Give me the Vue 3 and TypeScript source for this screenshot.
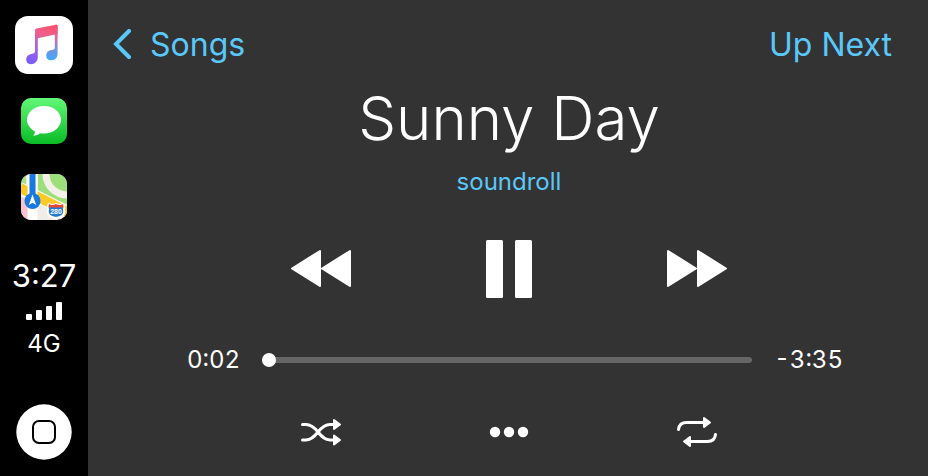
<script setup lang="ts">
import { computed, ref } from 'vue'

const title = 'Sunny Day'
const artist = 'soundroll'
const duration = 217
const elapsed = ref(2)
const playing = ref(true)

function clock(seconds: number): string {
  return `${Math.floor(seconds / 60)}:${String(seconds % 60).padStart(2, '0')}`
}

const elapsedLabel = computed(() => clock(elapsed.value))
const remainingLabel = computed(() => `-${clock(duration - elapsed.value)}`)
const sliderPosition = computed({
  get: () => Math.max(0, elapsed.value - 2),
  set: (value: number) => {
    elapsed.value = Number(value) + 2
  },
})
</script>

<template>
  <div class="screen">
    <aside class="dock">
      <nav class="apps">
        <button class="app app-large" type="button" aria-label="Music">
          <svg viewBox="0 0 58 58">
            <defs>
              <linearGradient id="note" gradientUnits="userSpaceOnUse" x1="38" y1="9" x2="24" y2="48">
                <stop offset="0" stop-color="#f94f6b" />
                <stop offset="0.3" stop-color="#f0608c" />
                <stop offset="0.65" stop-color="#a164e8" />
                <stop offset="1" stop-color="#7c5cfa" />
              </linearGradient>
              <linearGradient id="note-right" gradientUnits="userSpaceOnUse" x1="40" y1="9" x2="38" y2="44">
                <stop offset="0" stop-color="#f94f6b" />
                <stop offset="0.3" stop-color="#df659d" />
                <stop offset="0.65" stop-color="#8190d8" />
                <stop offset="1" stop-color="#3aaaf8" />
              </linearGradient>
            </defs>
            <rect width="58" height="58" rx="13" fill="#fff" />
            <path
              d="M20 14.2Q20 12.8 21.4 12.5L41 8.8Q42.6 8.5 42.6 10V18L22.8 22.2V41C22.8 45.5 19.8 48.2 15.8 48.2C13 48.2 11.2 46.3 11.2 43.5C11.2 40.4 13.2 38.4 16 37.9L18.3 37.5Q20 37.2 20 35.5Z"
              fill="url(#note)"
            />
            <path
              d="M39.8 9L41 8.8Q42.6 8.5 42.6 10V37C42.6 41.8 39.9 44.3 36 44.3C33 44.3 31.2 42.5 31.2 39.7C31.2 36.6 33.3 34.6 36 34.1L38.2 33.7Q39.8 33.4 39.8 31.5Z"
              fill="url(#note-right)"
            />
          </svg>
        </button>
        <button class="app" type="button" aria-label="Messages">
          <svg viewBox="0 0 46 46">
            <defs>
              <linearGradient id="green" x1="0" y1="0" x2="0" y2="1">
                <stop offset="0" stop-color="#62f878" />
                <stop offset="1" stop-color="#0abb25" />
              </linearGradient>
            </defs>
            <rect width="46" height="46" rx="10" fill="url(#green)" />
            <path
              d="M23 8C13.6 8 6 14.1 6 21.8C6 26.5 9 30.7 13.7 33.2C14.2 34.9 13.4 36.6 12.2 37.8C15.1 37.7 17.4 36.6 19.2 35.2C20.4 35.4 21.7 35.6 23 35.6C32.4 35.6 40 29.4 40 21.8C40 14.1 32.4 8 23 8Z"
              fill="#fff"
            />
          </svg>
        </button>
        <button class="app" type="button" aria-label="Maps">
          <svg viewBox="0 0 46 46">
            <defs>
              <clipPath id="tile"><rect width="46" height="46" rx="10" /></clipPath>
            </defs>
            <g clip-path="url(#tile)">
              <rect width="46" height="46" fill="#efede5" />
              <path d="M0 0H5V12L0 9Z" fill="#a5e183" />
              <path d="M17 0H46V35L17 16Z" fill="#9ddf7a" />
              <circle cx="46" cy="0" r="21" fill="none" stroke="#f2f0e9" stroke-width="7" />
              <path d="M0 23L16 31V46H0Z" fill="#f8c3cd" />
              <path d="M-1 14L47 38" fill="none" stroke="#fff" stroke-width="12" />
              <path d="M-1 14L47 38" fill="none" stroke="#fbc928" stroke-width="10" />
              <path d="M6.5 0H16.5V46H6.5Z" fill="#fff" />
              <path d="M8.5 0H14.5V27H8.5Z" fill="#1679df" />
              <circle cx="11.5" cy="27" r="8" fill="#1679df" />
              <path d="M11.5 20.5L15.2 31L11.5 28.8L7.8 31Z" fill="#fff" />
              <path
                d="M28 30Q26 32 27 35Q25 43 35 44Q45 43 43 35Q44 32 42 30Q39 32 35 30Q31 32 28 30Z"
                fill="#277bcc"
                stroke="#fff"
                stroke-width="2"
              />
              <path d="M27.5 33.5L28 30Q31 32 35 30Q39 32 42 30L42.5 33.5Z" fill="#e54934" />
              <text x="35" y="40" class="route">280</text>
            </g>
          </svg>
        </button>
      </nav>

      <div class="status">
        <time class="time">3:27</time>
        <svg class="signal" viewBox="0 0 36 18" role="img" aria-label="Signal strength">
          <rect x="0" y="12" width="6" height="6" rx="1" />
          <rect x="10" y="8" width="6" height="10" rx="1" />
          <rect x="20" y="4" width="6" height="14" rx="1" />
          <rect x="30" y="0" width="6" height="18" rx="1" />
        </svg>
        <span class="network">4G</span>
      </div>

      <button class="home" type="button" aria-label="Home">
        <svg viewBox="0 0 56 56">
          <circle cx="28" cy="28" r="27.7" fill="#fff" />
          <rect x="17" y="17" width="22" height="22" rx="6" fill="none" stroke="#000" stroke-width="2" />
        </svg>
      </button>
    </aside>

    <main class="player">
      <header class="bar">
        <a class="link back" href="#songs">
          <svg class="chevron" viewBox="0 0 20 32"><path d="M17 2L4 15L17 28" /></svg>
          <span>Songs</span>
        </a>
        <a class="link" href="#up-next">Up Next</a>
      </header>

      <h1 class="title">{{ title }}</h1>
      <p class="artist">{{ artist }}</p>

      <div class="controls transport">
        <button type="button" aria-label="Previous">
          <svg class="skip" viewBox="0 0 62 40">
            <path d="M30 2V37L2 19.5ZM60 2V37L32 19.5Z" />
          </svg>
        </button>
        <button type="button" :aria-label="playing ? 'Pause' : 'Play'" @click="playing = !playing">
          <svg class="pause" viewBox="0 0 48 60">
            <template v-if="playing">
              <rect x="1" y="1" width="17" height="58" rx="1.5" />
              <rect x="30" y="1" width="17" height="58" rx="1.5" />
            </template>
            <path v-else d="M3 2L46 30L3 58Z" />
          </svg>
        </button>
        <button type="button" aria-label="Next">
          <svg class="skip" viewBox="0 0 62 40">
            <path d="M2 2V37L30 19.5ZM32 2V37L60 19.5Z" />
          </svg>
        </button>
      </div>

      <div class="progress">
        <span class="clock">{{ elapsedLabel }}</span>
        <input v-model.number="sliderPosition" class="seek" type="range" min="0" :max="duration - 2" aria-label="Seek" />
        <span class="clock">{{ remainingLabel }}</span>
      </div>

      <div class="controls options">
        <button type="button" aria-label="Shuffle">
          <svg class="option" viewBox="0 0 42 32">
            <path
              class="line"
              d="M2.5 8.5H6C11 8.5 14 11 18 16C22 21 25 24 30 24H34M2.5 24H6C11 24 14 21 18 16C22 11 25 8.5 30 8.5H34"
            />
            <path class="head" d="M34 4L40 8.5L34 13ZM34 19.5L40 24L34 28.5Z" />
          </svg>
        </button>
        <button type="button" aria-label="More">
          <svg class="option" viewBox="0 0 42 32">
            <circle cx="7" cy="16" r="5.2" />
            <circle cx="21" cy="16" r="5.2" />
            <circle cx="35" cy="16" r="5.2" />
          </svg>
        </button>
        <button type="button" aria-label="Repeat">
          <svg class="option" viewBox="0 0 42 32">
            <path class="line" d="M2.5 13.5C3 9 6 6.5 10.5 6.5H28M39.5 18.5C39 23 36 25.5 31.5 25.5H14" />
            <path class="head" d="M28 2L34 6.5L28 11ZM14 21L8 25.5L14 30Z" />
          </svg>
        </button>
      </div>
    </main>
  </div>
</template>

<style>
body {
  margin: 0;
  background: #333;
}
</style>

<style scoped>
.screen {
  display: flex;
  min-height: 100vh;
  background: #333;
  color: #fff;
  font-family: Inter, "Liberation Sans", sans-serif;
}

button {
  display: flex;
  padding: 0;
  border: 0;
  background: none;
  color: inherit;
  cursor: pointer;
}

svg {
  display: block;
  fill: currentColor;
}

.dock {
  box-sizing: border-box;
  display: flex;
  flex: 0 0 88px;
  flex-direction: column;
  align-items: center;
  padding: 16px 0;
  background: #000;
}

.apps {
  display: flex;
  flex-direction: column;
  align-items: center;
}

.app {
  width: 46px;
  height: 46px;
  margin-bottom: 30px;
}

.app-large {
  width: 58px;
  height: 58px;
  margin-bottom: 24px;
}

.app svg {
  width: 100%;
}

.route {
  fill: #fff;
  font-size: 7px;
  font-weight: 800;
  text-anchor: middle;
}

.status {
  display: flex;
  flex-direction: column;
  align-items: center;
  margin-top: 6px;
}

.time {
  font-size: 31px;
  line-height: 40px;
}

.signal {
  width: 36px;
  margin: 6px 0 8px;
}

.network {
  font-size: 24px;
  line-height: 32px;
}

.home {
  margin-top: auto;
}

.home svg {
  width: 56px;
}

.player {
  flex: 1;
  min-width: 0;
  padding: 1px 0 0 2px;
}

.bar {
  display: flex;
  justify-content: space-between;
  padding: 24px 36px 16px 22px;
}

.link {
  color: #5ac8fa;
  font-size: 32px;
  line-height: 40px;
  text-decoration: none;
}

.back {
  display: flex;
  align-items: center;
  gap: 18px;
}

.chevron {
  width: 20px;
}

.chevron path {
  fill: none;
  stroke: currentColor;
  stroke-width: 4;
  stroke-linecap: round;
}

.title {
  margin: 0;
  font-size: 60px;
  font-weight: 300;
  line-height: 74px;
  text-align: center;
}

.artist {
  margin: 11px 0 41px;
  color: #5ac8fa;
  font-size: 24px;
  line-height: 32px;
  text-align: center;
}

.controls {
  display: grid;
  grid-template-columns: repeat(3, 188px);
  justify-content: center;
  place-items: center;
}

.transport path {
  stroke: currentColor;
  stroke-width: 2;
  stroke-linejoin: round;
}

.skip {
  width: 62px;
}

.pause {
  width: 48px;
}

.progress {
  display: flex;
  align-items: center;
  gap: 22px;
  padding: 0 85px 0 97px;
  margin: 45px 0 40px;
}

.clock {
  font-size: 24px;
  font-variant-numeric: tabular-nums;
  line-height: 32px;
}

.seek {
  flex: 1;
  min-width: 0;
  height: 14px;
  margin: 0;
  appearance: none;
  background: none;
}

.seek::-webkit-slider-runnable-track {
  height: 6px;
  border-radius: 3px;
  background: #666;
}

.seek::-webkit-slider-thumb {
  width: 14px;
  height: 14px;
  margin-top: -4px;
  border-radius: 50%;
  appearance: none;
  background: #fff;
}

.option {
  width: 42px;
}

.options .line {
  fill: none;
  stroke: currentColor;
  stroke-width: 3;
  stroke-linecap: round;
}

.options .head {
  stroke: currentColor;
  stroke-width: 2;
  stroke-linejoin: round;
}
</style>
